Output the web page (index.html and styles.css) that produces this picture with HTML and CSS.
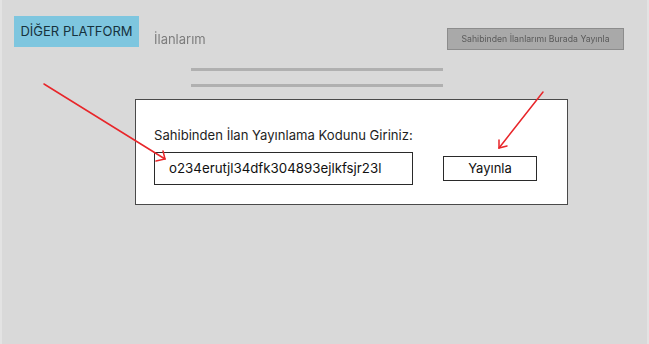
FILE: index.html
```html
<!DOCTYPE html>
<html lang="tr">
<head>
<meta charset="utf-8">
<title>Diğer Platform</title>
<link rel="stylesheet" href="styles.css">
</head>
<body>
<div class="page">
  <header class="header">
    <div class="tag">DİĞER PLATFORM</div>
    <div class="title">İlanlarım</div>
    <div class="top-btn">Sahibinden İlanlarımı Burada Yayınla</div>
  </header>
  <div class="lines">
    <div class="line"></div>
    <div class="line"></div>
  </div>
  <div class="modal">
    <div class="label">Sahibinden İlan Yayınlama Kodunu Giriniz:</div>
    <div class="row">
      <div class="input">o234erutjl34dfk304893ejlkfsjr23l</div>
      <div class="btn">Yayınla</div>
    </div>
  </div>
  <svg class="arrows" width="649" height="344" viewBox="0 0 649 344">
    <g stroke="#e8262a" stroke-width="1.5" fill="none" stroke-linecap="round">
      <path d="M44 84 L165 159"/>
      <path d="M163 151 L165 159 L156 161"/>
      <path d="M543 92 L499 148"/>
      <path d="M499 140 L499 148 L507 146"/>
    </g>
  </svg>
</div>
</body>
</html>
```
FILE: styles.css
```css
* { box-sizing: border-box; }
html, body { margin: 0; padding: 0; }
body {
  background: #d9d9d9;
  font-family: Inter, "Liberation Sans", sans-serif;
}
.page {
  position: relative;
  width: 649px;
  height: 344px;
  border-left: 2px solid #e3e3e3;
  border-right: 2px solid #e3e3e3;
  overflow: hidden;
}
.header {
  display: flex;
  align-items: flex-start;
  padding: 16px 0 0 12px;
}
.tag {
  width: 125px;
  height: 31px;
  background: #7ec6df;
  color: #16323d;
  font-size: 13px;
  line-height: 31px;
  text-align: center;
}
.title {
  margin: 15px 0 0 15px;
  font-size: 13px;
  color: #7d7d7d;
  filter: blur(0.7px);
}
.top-btn {
  margin: 12px 23px 0 auto;
  width: 177px;
  height: 22px;
  background: #a9a9a9;
  border: 1px solid #8c8c8c;
  color: #5a5a5a;
  font-size: 8.7px;
  line-height: 20px;
  text-align: center;
  filter: blur(0.6px);
}
.lines {
  margin: 18px 0 0 189px;
  width: 252px;
  display: flex;
  flex-direction: column;
  gap: 13px;
}
.line {
  height: 3px;
  background: #b0b0b0;
  filter: blur(0.6px);
}
.modal {
  margin: 12px 0 0 133px;
  width: 433px;
  height: 106px;
  background: #fff;
  border: 1px solid #4a4a4a;
  padding: 27px 0 0 18px;
}
.label {
  font-size: 13.1px;
  color: #1e1e1e;
  line-height: 16px;
}
.row {
  display: flex;
  align-items: center;
  margin-top: 9px;
}
.input {
  width: 259px;
  height: 33px;
  border: 1px solid #2a2a2a;
  padding-left: 14px;
  font-size: 13.3px;
  line-height: 31px;
  color: #111;
}
.btn {
  margin-left: 30px;
  width: 94px;
  height: 25px;
  border: 1px solid #2a2a2a;
  font-size: 13px;
  line-height: 23px;
  text-align: center;
  color: #111;
}
.arrows {
  position: absolute;
  left: -2px;
  top: 0;
  pointer-events: none;
}
```
